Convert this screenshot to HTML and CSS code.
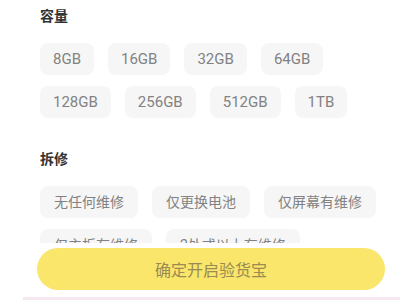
FILE: index.html
```html
<!DOCTYPE html>
<html lang="zh-CN">
<head>
<meta charset="utf-8">
<title>验货宝</title>
<link rel="stylesheet" href="styles.css">
</head>
<body>
<div class="page">
  <div class="content">
    <div class="section">
      <div class="title">容量</div>
      <div class="chips">
        <span class="chip">8GB</span>
        <span class="chip">16GB</span>
        <span class="chip">32GB</span>
        <span class="chip">64GB</span>
        <span class="chip">128GB</span>
        <span class="chip">256GB</span>
        <span class="chip">512GB</span>
        <span class="chip">1TB</span>
      </div>
    </div>
    <div class="section second">
      <div class="title">拆修</div>
      <div class="chips">
        <span class="chip cjk">无任何维修</span>
        <span class="chip cjk">仅更换电池</span>
        <span class="chip cjk">仅屏幕有维修</span>
        <span class="chip cjk">仅主板有维修</span>
        <span class="chip cjk">2处或以上有维修</span>
      </div>
    </div>
  </div>
  <div class="footer">
    <button class="confirm">确定开启验货宝</button>
  </div>
  <div class="strip"></div>
</div>
</body>
</html>
```
FILE: styles.css
```css
html, body {
  margin: 0;
  padding: 0;
  background: #ffffff;
}
.page {
  width: 400px;
  height: 300px;
  display: flex;
  flex-direction: column;
  overflow: hidden;
  font-family: "Roboto", "Noto Sans CJK SC", sans-serif;
}
.content {
  height: 243px;
  overflow: hidden;
  padding: 5px 0 0 40px;
  box-sizing: border-box;
  flex: none;
}
.title {
  font-family: "Noto Sans CJK SC", sans-serif;
  font-size: 14px;
  font-weight: 700;
  line-height: 20px;
  color: #333333;
}
.chips {
  margin-top: 18px;
  display: flex;
  flex-wrap: wrap;
  column-gap: 14px;
  row-gap: 11px;
  width: 350px;
}
.chip {
  height: 32px;
  line-height: 32px;
  padding: 0 13px;
  border-radius: 8px;
  background: #f6f6f6;
  color: #828282;
  font-size: 15px;
  white-space: nowrap;
}
.chip.cjk {
  padding: 0 14px;
  font-size: 14px;
}
.section.second {
  margin-top: 30px;
}
.footer {
  flex: none;
  padding: 5px 0 0 37px;
}
.confirm {
  width: 348px;
  height: 42px;
  border: none;
  border-radius: 21px;
  background: #f9e66b;
  color: #9b8a52;
  font-family: "Noto Sans CJK SC", sans-serif;
  font-size: 16px;
  padding: 0;
  display: flex;
  align-items: center;
  justify-content: center;
}
.strip {
  flex: none;
  margin-top: 7px;
  margin-left: 23px;
  height: 3px;
  background: #f6e8f1;
}
```
